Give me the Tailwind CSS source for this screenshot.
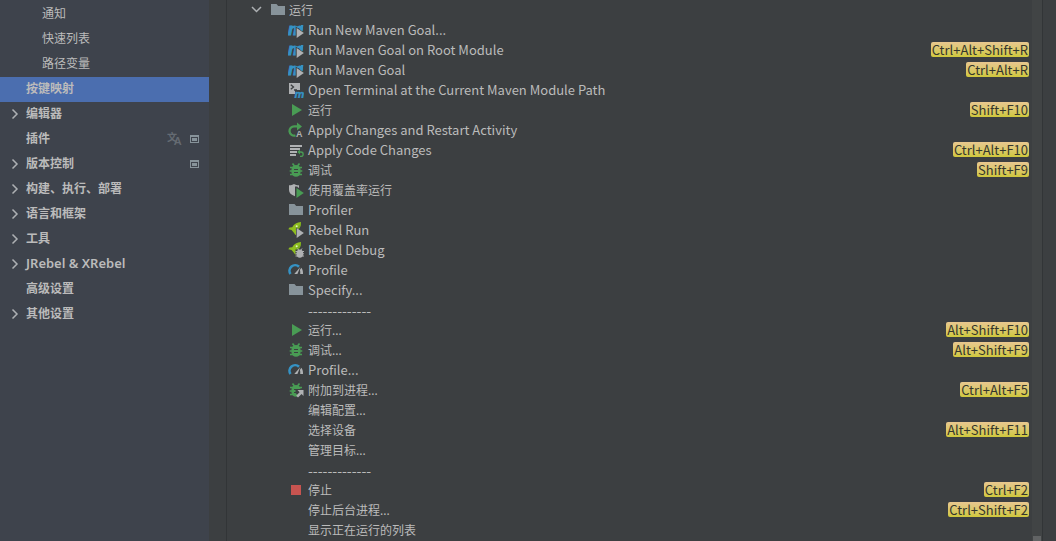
<!DOCTYPE html>
<html lang="zh-CN">
  <head>
    <meta charset="UTF-8" />
    <meta name="viewport" content="width=device-width, initial-scale=1.0" />
    <title>按键映射</title>
    <script src="https://cdn.jsdelivr.net/npm/@tailwindcss/browser@4"></script>
  </head>
  <body class="h-screen overflow-hidden flex bg-[#3c3f41] text-[#bbbbbb] text-[12px] font-['Noto_Sans','Noto_Sans_CJK_SC',sans-serif]">
    <!-- icon set -->
    <svg class="hidden">
      <symbol id="right" viewBox="0 0 16 16"><path d="M5.500 3.500 10 8l-4.500 4.500" fill="none" stroke="#adb0b3" stroke-width="1.500" /></symbol>
      <symbol id="down" viewBox="0 0 16 16"><path d="M4 5l4.500 4.500L13 5" fill="none" stroke="#adb0b3" stroke-width="1.500" /></symbol>
      <symbol id="folder" viewBox="0 0 16 16"><path d="M1 2h5.500L8.200 4H15v9H1z" fill="#87939a" /></symbol>
      <symbol id="play-badge" viewBox="0 0 16 16"><path d="M8.700 6 15.900 11 8.700 16z" fill="#afb1b3" /></symbol>
      <symbol id="maven" viewBox="0 0 16 16">
        <text x="0" y="12.500" font-family="Liberation Sans" font-size="17" font-weight="700" font-style="italic" fill="#3592c4" stroke="#3592c4" stroke-width="1">m</text>
        <path d="M7.700 4.500 16 10.500V16H7.700z" fill="#3c3f41" />
        <path d="M13 3h2.300L14.500 9 13 8z" fill="#3592c4" />
        <use href="#play-badge" />
      </symbol>
      <symbol id="terminal" viewBox="0 0 16 16">
        <path d="M1 1h11v7H7V12H1z" fill="#afb1b3" />
        <path d="M2.800 2.800 5.500 5 2.800 7.200M6 8h3" fill="none" stroke="#3c3f41" stroke-width="1.300" />
        <text x="6.500" y="15.500" font-family="Liberation Sans" font-size="11" font-weight="700" font-style="italic" fill="#3592c4" stroke="#3592c4" stroke-width=".4">m</text>
      </symbol>
      <symbol id="run" viewBox="0 0 16 16"><path d="M4 2l10 6-10 6z" fill="#499c54" /></symbol>
      <symbol id="restart" viewBox="0 0 16 16">
        <path d="M7.500 13.500A4.700 4.700 0 1 1 6.500 4.300H10" fill="none" stroke="#499c54" stroke-width="2.300" />
        <path d="M9 .5 14 4.600 9 8.500z" fill="#499c54" />
        <text x="8" y="15" font-family="Liberation Sans" font-size="9" font-weight="700" fill="#afb1b3">A</text>
      </symbol>
      <symbol id="code-changes" viewBox="0 0 16 16">
        <path d="M2 3h12v2H2zM2 6h10v2H2zM2 9h7v2H2zM2 12h6v2H2z" fill="#afb1b3" />
        <path d="M10.500 10H13a2 2 0 0 1 0 4.300h-1" fill="none" stroke="#499c54" stroke-width="1.300" />
        <path d="M12 7.500V12.500L9.300 10z" fill="#499c54" />
      </symbol>
      <symbol id="bug" viewBox="0 0 16 16">
        <path d="M4.500 1.500 6.500 4M11.500 1.500 9.500 4M2 5.500h12M1.700 9h12.600M2 12.500h12" fill="none" stroke="#499c54" stroke-width="1.700" />
        <path d="M8 3c2.500 0 4.500 1.700 4.500 4v3.500c0 2.500-2 4.300-4.500 4.300s-4.500-1.800-4.500-4.300V7c0-2.300 2-4 4.500-4z" fill="#499c54" />
        <path d="M6 7.500h4M6 10.500h4" stroke="#3c3f41" stroke-width="1" />
      </symbol>
      <symbol id="coverage" viewBox="0 0 16 16">
        <path d="M1 3.300C3 3.300 4.800 2.800 6 2c1.200.8 3 1.300 5 1.300V6L9.500 5V4.500H7v9.700C3 12.800 1 11 1 8z" fill="#afb1b3" />
        <path d="M8.500 6 15.800 11 8.500 16z" fill="#499c54" />
      </symbol>
      <symbol id="rocket" viewBox="0 0 16 16">
        <path d="M13 0c.3 3.500-1 6.500-4.500 8.800L9 12l-1.500 1-2.200-3L3.500 8 .3 7.200 1.500 5.600l2.700-.4C6 2 9 .2 13 0z" fill="#8fbe1f" />
        <path d="M13 0c.3 3.500-1 6.500-4.500 8.800L7 7.500C9.800 5.700 11.500 3.500 13 0z" fill="#79aa20" />
        <circle cx="8.700" cy="4.300" r="1" fill="#dfeec0" />
      </symbol>
      <symbol id="rebel-run" viewBox="0 0 16 16">
        <use href="#rocket" />
        <path d="M8 5.500 16 11 8 16z" fill="#3c3f41" />
        <use href="#play-badge" />
      </symbol>
      <symbol id="rebel-debug" viewBox="0 0 16 16">
        <use href="#rocket" />
        <path d="M7.500 7.500h8.500V16H7.500z" fill="#3c3f41" />
        <path d="M9.500 6.500 11 8.500M14 6.500 12.500 8.500M7.500 9.500h8.500M7.500 11.800h8.500M7.500 14h8.500" stroke="#afb1b3" stroke-width="1" fill="none" />
        <ellipse cx="11.800" cy="11.600" rx="3.300" ry="4.200" fill="#afb1b3" />
      </symbol>
      <symbol id="gauge" viewBox="0 0 16 16">
        <path d="M2.500 12A5.600 5.600 0 0 1 11 4.800" fill="none" stroke="#3592c4" stroke-width="2.600" />
        <path d="M12.300 5 9.400 12H6.300z" fill="#afb1b3" />
        <path d="M13.300 5.800C14.600 7.400 15.200 9.600 15 12H12.200C12.400 10.500 12.300 9.200 11.900 8.100z" fill="#afb1b3" />
      </symbol>
      <symbol id="attach" viewBox="0 0 16 16">
        <use href="#bug" />
        <path d="M7.500 7H16V16H9.500V13L7.500 11z" fill="#3c3f41" />
        <path d="M9.500 8H15.500V14L13.500 12 10 15.500 8.200 13.700 11.600 10.200z" fill="#afb1b3" />
      </symbol>
      <symbol id="stop" viewBox="0 0 16 16"><path d="M3 3h10v10H3z" fill="#c75450" /></symbol>
      <symbol id="project" viewBox="0 0 16 16">
        <path d="M4 4h9v8H4zM5 6v5h7V6z" fill="#87939a" fill-rule="evenodd" />
        <path d="M6 7h5v3H6z" fill="#87939a" />
      </symbol>
      <symbol id="translate" viewBox="0 0 16 16">
        <text x="1" y="10" font-size="10" font-weight="700" fill="#656b73">文</text>
        <text x="8" y="14" font-size="11" font-weight="600" fill="#656b73">A</text>
      </symbol>
    </svg>

    <!-- settings categories -->
    <nav class="w-[209px] shrink-0 bg-[#3e434c] pt-[2px] font-semibold">
      <a href="#" class="flex items-center h-[25px] pb-[2px] pl-[42px] font-normal">通知</a>
      <a href="#" class="flex items-center h-[25px] pb-[2px] pl-[42px] font-normal">快速列表</a>
      <a href="#" class="flex items-center h-[25px] pb-[2px] pl-[42px] font-normal">路径变量</a>
      <a href="#" aria-current="page" class="flex items-center h-[25px] pb-[2px] pl-[26px] bg-[#4b6eaf]">按键映射</a>
      <a href="#" class="flex items-center h-[25px] pb-[2px] pl-[7px] gap-[3px]"><svg class="size-4"><use href="#right" /></svg>编辑器</a>
      <a href="#" class="flex items-center h-[25px] pb-[2px] pl-[26px] pr-[7px] gap-1">
        <span class="flex-1">插件</span>
        <svg class="size-4"><use href="#translate" /></svg>
        <svg class="size-4"><use href="#project" /></svg>
      </a>
      <a href="#" class="flex items-center h-[25px] pb-[2px] pl-[7px] pr-[7px] gap-[3px]">
        <svg class="size-4"><use href="#right" /></svg>
        <span class="flex-1">版本控制</span>
        <svg class="size-4"><use href="#project" /></svg>
      </a>
      <a href="#" class="flex items-center h-[25px] pb-[2px] pl-[7px] gap-[3px]"><svg class="size-4"><use href="#right" /></svg>构建、执行、部署</a>
      <a href="#" class="flex items-center h-[25px] pb-[2px] pl-[7px] gap-[3px]"><svg class="size-4"><use href="#right" /></svg>语言和框架</a>
      <a href="#" class="flex items-center h-[25px] pb-[2px] pl-[7px] gap-[3px]"><svg class="size-4"><use href="#right" /></svg>工具</a>
      <a href="#" class="flex items-center h-[25px] pb-[2px] pl-[7px] gap-[3px] text-[13px]"><svg class="size-4"><use href="#right" /></svg>JRebel &amp; XRebel</a>
      <a href="#" class="flex items-center h-[25px] pb-[2px] pl-[26px]">高级设置</a>
      <a href="#" class="flex items-center h-[25px] pb-[2px] pl-[7px] gap-[3px]"><svg class="size-4"><use href="#right" /></svg>其他设置</a>
    </nav>

    <!-- keymap tree -->
    <main class="flex-1 flex ml-[17px] mr-[13px] border-x border-[#323537]">
      <div class="flex-1 pr-[3px]">
        <button class="flex items-center w-full h-5 pl-[21px]">
          <svg class="size-4"><use href="#down" /></svg>
          <svg class="size-4 ml-[6px] mr-[3px]"><use href="#folder" /></svg>
          <span class="pt-[2px]">运行</span>
        </button>
        <ul class="pl-[61px]">
          <li class="flex items-center h-5 gap-1"><svg class="size-4"><use href="#maven" /></svg><span class="flex-1 text-[13px] font-['Noto_Sans_CJK_SC',sans-serif]">Run New Maven Goal...</span></li>
          <li class="flex items-center h-5 gap-1"><svg class="size-4"><use href="#maven" /></svg><span class="flex-1 text-[13px] font-['Noto_Sans_CJK_SC',sans-serif]">Run Maven Goal on Root Module</span><kbd class="h-[15px] mb-px px-px rounded-xs bg-linear-to-b from-[#e8c78f] to-[#d0c83a] text-[#35362c] text-[13px] leading-[15px] font-['Noto_Sans_CJK_SC',sans-serif]">Ctrl+Alt+Shift+R</kbd></li>
          <li class="flex items-center h-5 gap-1"><svg class="size-4"><use href="#maven" /></svg><span class="flex-1 text-[13px] font-['Noto_Sans_CJK_SC',sans-serif]">Run Maven Goal</span><kbd class="h-[15px] mb-px px-px rounded-xs bg-linear-to-b from-[#e8c78f] to-[#d0c83a] text-[#35362c] text-[13px] leading-[15px] font-['Noto_Sans_CJK_SC',sans-serif]">Ctrl+Alt+R</kbd></li>
          <li class="flex items-center h-5 gap-1"><svg class="size-4"><use href="#terminal" /></svg><span class="flex-1 text-[13px] font-['Noto_Sans_CJK_SC',sans-serif]">Open Terminal at the Current Maven Module Path</span></li>
          <li class="flex items-center h-5 gap-1"><svg class="size-4"><use href="#run" /></svg><span class="flex-1 pt-[2px]">运行</span><kbd class="h-[15px] mb-px px-px rounded-xs bg-linear-to-b from-[#e8c78f] to-[#d0c83a] text-[#35362c] text-[13px] leading-[15px] font-['Noto_Sans_CJK_SC',sans-serif]">Shift+F10</kbd></li>
          <li class="flex items-center h-5 gap-1"><svg class="size-4"><use href="#restart" /></svg><span class="flex-1 text-[13px] font-['Noto_Sans_CJK_SC',sans-serif]">Apply Changes and Restart Activity</span></li>
          <li class="flex items-center h-5 gap-1"><svg class="size-4"><use href="#code-changes" /></svg><span class="flex-1 text-[13px] font-['Noto_Sans_CJK_SC',sans-serif]">Apply Code Changes</span><kbd class="h-[15px] mb-px px-px rounded-xs bg-linear-to-b from-[#e8c78f] to-[#d0c83a] text-[#35362c] text-[13px] leading-[15px] font-['Noto_Sans_CJK_SC',sans-serif]">Ctrl+Alt+F10</kbd></li>
          <li class="flex items-center h-5 gap-1"><svg class="size-4"><use href="#bug" /></svg><span class="flex-1 pt-[2px]">调试</span><kbd class="h-[15px] mb-px px-px rounded-xs bg-linear-to-b from-[#e8c78f] to-[#d0c83a] text-[#35362c] text-[13px] leading-[15px] font-['Noto_Sans_CJK_SC',sans-serif]">Shift+F9</kbd></li>
          <li class="flex items-center h-5 gap-1"><svg class="size-4"><use href="#coverage" /></svg><span class="flex-1 pt-[2px]">使用覆盖率运行</span></li>
          <li class="flex items-center h-5 gap-1"><svg class="size-4"><use href="#folder" /></svg><span class="flex-1 text-[13px] font-['Noto_Sans_CJK_SC',sans-serif]">Profiler</span></li>
          <li class="flex items-center h-5 gap-1"><svg class="size-4"><use href="#rebel-run" /></svg><span class="flex-1 text-[13px] font-['Noto_Sans_CJK_SC',sans-serif]">Rebel Run</span></li>
          <li class="flex items-center h-5 gap-1"><svg class="size-4"><use href="#rebel-debug" /></svg><span class="flex-1 text-[13px] font-['Noto_Sans_CJK_SC',sans-serif]">Rebel Debug</span></li>
          <li class="flex items-center h-5 gap-1"><svg class="size-4"><use href="#gauge" /></svg><span class="flex-1 text-[13px] font-['Noto_Sans_CJK_SC',sans-serif]">Profile</span></li>
          <li class="flex items-center h-5 gap-1"><svg class="size-4"><use href="#folder" /></svg><span class="flex-1 text-[13px] font-['Noto_Sans_CJK_SC',sans-serif]">Specify...</span></li>
          <li class="flex items-center h-5 pl-5 text-[14px] font-['Noto_Sans_CJK_SC',sans-serif]">-------------</li>
          <li class="flex items-center h-5 gap-1"><svg class="size-4"><use href="#run" /></svg><span class="flex-1 pt-[2px]">运行...</span><kbd class="h-[15px] mb-px px-px rounded-xs bg-linear-to-b from-[#e8c78f] to-[#d0c83a] text-[#35362c] text-[13px] leading-[15px] font-['Noto_Sans_CJK_SC',sans-serif]">Alt+Shift+F10</kbd></li>
          <li class="flex items-center h-5 gap-1"><svg class="size-4"><use href="#bug" /></svg><span class="flex-1 pt-[2px]">调试...</span><kbd class="h-[15px] mb-px px-px rounded-xs bg-linear-to-b from-[#e8c78f] to-[#d0c83a] text-[#35362c] text-[13px] leading-[15px] font-['Noto_Sans_CJK_SC',sans-serif]">Alt+Shift+F9</kbd></li>
          <li class="flex items-center h-5 gap-1"><svg class="size-4"><use href="#gauge" /></svg><span class="flex-1 text-[13px] font-['Noto_Sans_CJK_SC',sans-serif]">Profile...</span></li>
          <li class="flex items-center h-5 gap-1"><svg class="size-4"><use href="#attach" /></svg><span class="flex-1 pt-[2px]">附加到进程...</span><kbd class="h-[15px] mb-px px-px rounded-xs bg-linear-to-b from-[#e8c78f] to-[#d0c83a] text-[#35362c] text-[13px] leading-[15px] font-['Noto_Sans_CJK_SC',sans-serif]">Ctrl+Alt+F5</kbd></li>
          <li class="flex items-center h-5 pl-5"><span class="flex-1 pt-[2px]">编辑配置...</span></li>
          <li class="flex items-center h-5 pl-5"><span class="flex-1 pt-[2px]">选择设备</span><kbd class="h-[15px] mb-px px-px rounded-xs bg-linear-to-b from-[#e8c78f] to-[#d0c83a] text-[#35362c] text-[13px] leading-[15px] font-['Noto_Sans_CJK_SC',sans-serif]">Alt+Shift+F11</kbd></li>
          <li class="flex items-center h-5 pl-5"><span class="flex-1 pt-[2px]">管理目标...</span></li>
          <li class="flex items-center h-5 pl-5 text-[14px] font-['Noto_Sans_CJK_SC',sans-serif]">-------------</li>
          <li class="flex items-center h-5 gap-1"><svg class="size-4"><use href="#stop" /></svg><span class="flex-1 pt-[2px]">停止</span><kbd class="h-[15px] mb-px px-px rounded-xs bg-linear-to-b from-[#e8c78f] to-[#d0c83a] text-[#35362c] text-[13px] leading-[15px] font-['Noto_Sans_CJK_SC',sans-serif]">Ctrl+F2</kbd></li>
          <li class="flex items-center h-5 pl-5"><span class="flex-1 pt-[2px]">停止后台进程...</span><kbd class="h-[15px] mb-px px-px rounded-xs bg-linear-to-b from-[#e8c78f] to-[#d0c83a] text-[#35362c] text-[13px] leading-[15px] font-['Noto_Sans_CJK_SC',sans-serif]">Ctrl+Shift+F2</kbd></li>
          <li class="flex items-center h-5 pl-5"><span class="flex-1 pt-[2px]">显示正在运行的列表</span></li>
        </ul>
      </div>
      <!-- scrollbar -->
      <div class="w-[10px] flex flex-col justify-end items-center bg-[#414445]">
        <div class="w-2 h-[5px] bg-[#616364]"></div>
      </div>
    </main>
  </body>
</html>
